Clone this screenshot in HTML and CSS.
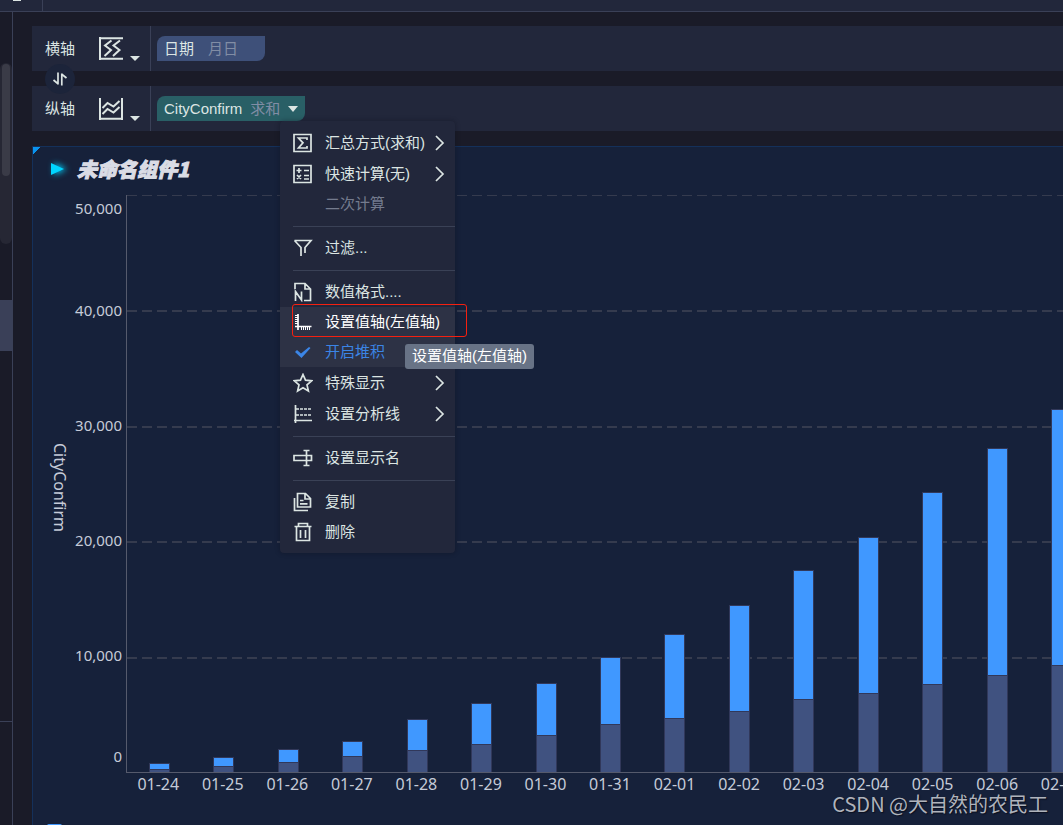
FILE: index.html
```html
<!DOCTYPE html>
<html lang="zh-CN">
<head>
<meta charset="utf-8">
<title>未命名组件1</title>
<link rel="stylesheet" href="styles.css">
</head>
<body>
<header class="topbar"><div class="topbar-cell"><span class="topbar-knob"></span></div></header>
<div class="workspace">
  <aside class="rail">
    <div class="rail-track"><div class="rail-thumb"></div></div>
    <div class="rail-active"></div>
    <div class="rail-rule"></div>
  </aside>
  <main class="content">
    <div class="shelves">
      <section class="shelf">
        <div class="shelf-head">
          <span>横轴</span>
          <button class="type-btn" aria-label="横轴类型">
            <svg class="type-icon" viewBox="0 0 24 24"><path d="M1 0v23M0 1.200h24M0 21.800h24M12.500 3.500L6 8.500l6 4.500-6.500 6M21 3.500L14.500 8.500l6 4.500-6.500 6"/></svg>
            <i class="caret"></i>
          </button>
        </div>
        <button class="pill pill-date"><span>日期</span><span class="pill-note">月日</span></button>
      </section>
      <button class="swap" aria-label="交换横纵轴">
        <svg viewBox="0 0 16 16"><path d="M6 1.500v12M6.300 13L1.500 9M9.800 14.500v-12M9.500 3l5 4"/></svg>
      </button>
      <section class="shelf">
        <div class="shelf-head">
          <span>纵轴</span>
          <button class="type-btn" aria-label="纵轴类型">
            <svg class="type-icon" viewBox="0 0 24 24"><path d="M1 1v22M23 1v22M0 21.800h24M3.500 11l5-5 6 3.500L20.500 4M3.500 17l5-5 6 3.500 6-5.500"/></svg>
            <i class="caret"></i>
          </button>
        </div>
        <div class="pill-anchor">
          <button class="pill pill-value" aria-expanded="true"><span>CityConfirm</span><span class="pill-note">求和</span><i class="caret"></i></button>
          <div class="menu" role="menu">
            <button class="item item-sub" role="menuitem">
              <svg viewBox="0 0 20 20"><path d="M1 1.500h17v17H1zM14 7V5H5.500l4.500 4.800L5.500 15H14v-2"/></svg>
              <span>汇总方式(求和)</span><svg class="arrow" viewBox="0 0 10 16"><path d="M1 1l7 7-7 7"/></svg></button>
            <button class="item item-sub" role="menuitem">
              <svg viewBox="0 0 20 20"><path d="M1 1.500h17v17H1zM3.500 6.500h5M6 4v5M11 6.500h5M4 11l4 4M8 11l-4 4M11 11.500h5M11 15h5"/></svg>
              <span>快速计算(无)</span><svg class="arrow" viewBox="0 0 10 16"><path d="M1 1l7 7-7 7"/></svg></button>
            <button class="item item-off" role="menuitem" disabled><svg viewBox="0 0 20 20"></svg><span>二次计算</span></button>
            <hr>
            <button class="item" role="menuitem">
              <svg viewBox="0 0 20 20"><path d="M1.500 2.500h16.500L12 9.500V15M1.500 2.500L8 9.500V18"/></svg>
              <span>过滤...</span></button>
            <hr>
            <button class="item" role="menuitem">
              <svg viewBox="0 0 20 20"><path d="M2 7V1.500h10L17.500 7v11.500H11M12 1.500V7h5.500M2.500 19V9.500L8.500 18V9.500"/></svg>
              <span>数值格式....</span></button>
            <button class="item item-hover" role="menuitem" aria-describedby="axis-tip">
              <svg viewBox="0 0 20 20"><path d="M5 2v16M2 14.500h16.500"/><path class="thin" d="M2 3.500h3M2 5.500h3M2 7.500h3M2 9.500h3M2 11.500h3M8.500 15v3M10.500 15v3M12.500 15v3M14.500 15v3M16.500 15v3"/></svg>
              <span>设置值轴(左值轴)</span>
              <span class="mark"></span>
              <span class="tooltip" id="axis-tip" role="tooltip">设置值轴(左值轴)</span>
            </button>
            <button class="item item-on" role="menuitemcheckbox" aria-checked="true">
              <svg viewBox="0 0 20 20"><path class="solid" d="M2 10l2-2 4 3.500L16 5l1.500 1L8.500 16z"/></svg>
              <span>开启堆积</span></button>
            <button class="item item-sub" role="menuitem">
              <svg viewBox="0 0 20 20"><path d="M10 1.500l2.500 5.700 6.200.6-4.700 4.100 1.400 6.100L10 14.800 4.600 18 6 11.900 1.300 7.800l6.200-.6z"/></svg>
              <span>特殊显示</span><svg class="arrow" viewBox="0 0 10 16"><path d="M1 1l7 7-7 7"/></svg></button>
            <button class="item item-sub" role="menuitem">
              <svg viewBox="0 0 20 20"><path d="M2.500 1v18M1 16.500h18"/><path class="dots" d="M3 5h15M3 11h15"/></svg>
              <span>设置分析线</span><svg class="arrow" viewBox="0 0 10 16"><path d="M1 1l7 7-7 7"/></svg></button>
            <hr>
            <button class="item" role="menuitem">
              <svg viewBox="0 0 20 20"><path d="M13 7.500H1v5h12M10.500 2.500h6M10.500 17.500h6M13.500 2.500v15M14 7.500h4.500v5H14"/></svg>
              <span>设置显示名</span></button>
            <hr>
            <button class="item" role="menuitem">
              <svg viewBox="0 0 20 20"><path d="M4.500 1.500h8l5 5V15h-13zM12 1.500V7h5.500M1.500 6v12.500H15M7 8.500h3.500M7 11.800h7.500"/></svg>
              <span>复制</span></button>
            <button class="item" role="menuitem">
              <svg viewBox="0 0 20 20"><path d="M1.500 4.500h17M5.500 4V1.500h9V4M3.500 5v13.500h13V5M7.500 8v8M12.500 8v8"/></svg>
              <span>删除</span></button>
          </div>
        </div>
      </section>
    </div>

    <section class="panel">
      <h2 class="panel-title"><svg class="play" viewBox="0 0 14 14"><path d="M0 1l13 6-13 6z"/></svg>未命名组件1</h2>
      <div class="chart">
        <div class="axis-name">CityConfirm</div>
        <div class="y-axis"><span>50,000</span><span>40,000</span><span>30,000</span><span>20,000</span><span>10,000</span><span>0</span></div>
        <div class="plot">
          <div class="gridlines"><i></i><i></i><i></i><i></i><i></i></div>
          <div class="bars">
            <div class="bar" style="--a:3;--b:6"></div>
            <div class="bar" style="--a:6;--b:9"></div>
            <div class="bar" style="--a:10;--b:13"></div>
            <div class="bar" style="--a:16;--b:15"></div>
            <div class="bar" style="--a:22;--b:31"></div>
            <div class="bar" style="--a:28;--b:41"></div>
            <div class="bar" style="--a:37;--b:52"></div>
            <div class="bar" style="--a:48;--b:67"></div>
            <div class="bar" style="--a:54;--b:84"></div>
            <div class="bar" style="--a:61;--b:106"></div>
            <div class="bar" style="--a:73;--b:129"></div>
            <div class="bar" style="--a:79;--b:156"></div>
            <div class="bar" style="--a:88;--b:192"></div>
            <div class="bar" style="--a:97;--b:227"></div>
            <div class="bar" style="--a:107;--b:256"></div>
          </div>
        </div>
        <div class="x-axis">
          <span>01-24</span><span>01-25</span><span>01-26</span><span>01-27</span><span>01-28</span><span>01-29</span><span>01-30</span><span>01-31</span><span>02-01</span><span>02-02</span><span>02-03</span><span>02-04</span><span>02-05</span><span>02-06</span><span>02-07</span>
        </div>
      </div>
      <div class="legend"><i></i></div>
    </section>
  </main>
</div>
<div class="watermark">CSDN @大自然的农民工</div>
</body>
</html>
```
FILE: styles.css
```css
*, *::before, *::after { box-sizing: border-box; }
body {
  margin: 0;
  height: 100vh;
  overflow: hidden;
  display: flex;
  flex-direction: column;
  background: #1a1b28;
  color: #dce5e3;
  font: 15px/20px "Liberation Sans", "Noto Sans CJK SC", sans-serif;
}
button {
  border: 0;
  padding: 0;
  background: none;
  color: inherit;
  font: inherit;
  cursor: pointer;
}
svg { fill: none; stroke: currentColor; stroke-width: 1.700; flex: none; }

.topbar { height: 12px; flex: none; background: #22273b; border-bottom: 1px solid #3a4057; }
.topbar-cell { width: 43px; height: 100%; padding-left: 13px; border-right: 1px solid #3a4057; }
.topbar-knob { display: block; width: 8px; height: 1px; background: #dce5e3; }

.workspace { flex: 1; min-height: 0; display: flex; }
.rail { width: 13px; flex: none; border-right: 1px solid #3a4057; padding-top: 51px; }
.rail-track { height: 181px; padding: 1px 2px; background: #262734; border-radius: 6px; }
.rail-thumb { height: 112px; background: #3a3b47; border-radius: 4px; }
.rail-active { height: 51px; margin-top: 56px; background: #3a4058; }
.rail-rule { height: 1px; margin-top: 370px; background: #3a4057; }

.content { flex: 1; min-width: 0; display: flex; flex-direction: column; gap: 15px; padding: 14px 0 0 19px; }
.shelves { position: relative; display: flex; flex-direction: column; gap: 15px; }
.shelf { display: flex; align-items: center; gap: 6px; height: 45px; background: #22273b; }
.shelf-head {
  display: flex;
  align-items: center;
  gap: 24px;
  width: 119px;
  height: 100%;
  padding-left: 13px;
  border-right: 1px solid #3a4057;
}
.type-btn { display: flex; align-items: flex-end; gap: 7px; }
.type-icon { width: 24px; height: 24px; stroke-width: 2; }
.caret { border: 5px solid transparent; border-top-color: #dce5e3; border-bottom: 0; }
.swap {
  position: absolute;
  top: 38px;
  left: 13px;
  width: 30px;
  height: 30px;
  border-radius: 50%;
  background: #1c243a;
  display: grid;
  place-items: center;
}
.swap svg { width: 16px; height: 16px; }

.pill { display: flex; align-items: center; height: 25px; padding: 0 7px; border-radius: 8px 0 8px 0; }
.pill-date { width: 108px; gap: 14px; background: #3e5079; }
.pill-value { gap: 8px; background: #295f66; }
.pill-value .caret { border-width: 6px 5px 0; }
.pill-note { color: #818da5; }
.pill-anchor { position: relative; }

.menu {
  position: absolute;
  z-index: 2;
  top: 100%;
  left: 123px;
  width: 175px;
  padding: 6px 0;
  background: #22273b;
  border-radius: 4px;
  box-shadow: 0 0 5px rgba(10, 12, 25, .4);
}
.menu hr { height: 1px; margin: 7px 0 6px 13px; border: 0; background: #3a4156; }
.item {
  position: relative;
  display: flex;
  align-items: center;
  gap: 8px;
  width: 100%;
  height: 30px;
  padding: 0 10px 0 13px;
  text-align: left;
  white-space: nowrap;
}
.item svg { width: 20px; height: 20px; margin-right: 4px; }
.item .arrow { width: 10px; height: 16px; margin: 0 0 0 auto; }
.item-sub { height: 31px; }
.item-off { color: #747b8e; }
.item-hover { background: #2d3245; color: #fff; z-index: 1; }
.item-on { background: #2d3245; color: #3b85e6; }
.item .thin { stroke-width: 1; }
.item .dots { stroke-dasharray: 3 1; }
.item .solid { fill: currentColor; stroke: none; }
.mark {
  position: absolute;
  top: -3px;
  left: 12px;
  width: 175px;
  height: 33px;
  border: 1px solid #f52010;
  border-radius: 3px;
}
.tooltip {
  position: absolute;
  top: 37px;
  left: 125px;
  padding: 2px 7px 3px;
  border-radius: 3px;
  background: #687386;
  color: #fff;
}

.panel {
  flex: 1;
  min-height: 0;
  display: flex;
  flex-direction: column;
  overflow: hidden;
  background: linear-gradient(135deg, #0a93ee 7px, transparent 7px) #16213a;
  box-shadow: inset 1px 1px 0 #14305a;
}
.panel-title {
  display: flex;
  align-items: center;
  gap: 12px;
  height: 49px;
  margin: 0;
  padding: 0 0 4px 19px;
  color: #dadce5;
  font: italic 900 20px/24px "Noto Sans CJK SC", sans-serif;
  -webkit-text-stroke: 1px #dadce5;
}
.play { width: 14px; height: 14px; overflow: visible; filter: drop-shadow(3px 0 3px #00c8f5); }
.play path { fill: #00d5ff; stroke: none; }
.chart {
  flex: 1;
  min-height: 0;
  display: grid;
  grid-template: 1fr 25px / 42px 52px 1fr;
  margin-right: -31px;
  color: #c5cbd8;
  font: 15px/20px "Noto Sans", sans-serif;
}
.axis-name { writing-mode: vertical-rl; justify-self: end; align-self: center; padding-top: 8px; margin-right: 4px; font-size: 16px; }
.y-axis {
  display: grid;
  grid-template-rows: 1fr 2fr 2fr 2fr 2fr 1fr;
  align-items: center;
  padding: 0 4px 3px 0;
  text-align: right;
}
.y-axis span:first-child { align-self: start; padding-top: 3px; }
.y-axis span:last-child { align-self: end; padding-bottom: 4px; }
.plot { display: grid; border-left: 1px solid #555a6c; border-bottom: 1px solid #555a6c; }
.gridlines, .bars { grid-area: 1 / 1; display: grid; }
.gridlines i { background: repeating-linear-gradient(90deg, #353b4e 0 10px, transparent 10px 15px) top / 100% 2px no-repeat; }
.gridlines i:first-child { background-size: 100% 1px; }
.bars { grid-auto-flow: column; grid-auto-columns: 1fr; }
.bar { display: flex; flex-direction: column; justify-content: flex-end; align-items: center; }
.bar::before, .bar::after { content: ""; width: 21px; border: solid #31385a; border-width: 1px 1px 0; }
.bar::before { height: calc(var(--b) / 577 * 100%); background: #4098ff; }
.bar::after { height: calc(var(--a) / 577 * 100%); background: #405280; }
.x-axis { grid-column: 3; display: grid; grid-auto-flow: column; grid-auto-columns: 1fr; padding-top: 1px; text-align: center; font-size: 16px; }
.legend { height: 27px; flex: none; padding: 26px 0 0 15px; overflow: hidden; }
.legend i { display: block; width: 15px; height: 12px; background: #4098ff; border-radius: 2px; }
.watermark {
  position: absolute;
  right: 15px;
  bottom: 9px;
  color: rgba(205, 208, 214, .85);
  font: 20px/24px "Noto Sans CJK SC", sans-serif;
  text-shadow: 1px 1px 1px #0b1020;
}
```
